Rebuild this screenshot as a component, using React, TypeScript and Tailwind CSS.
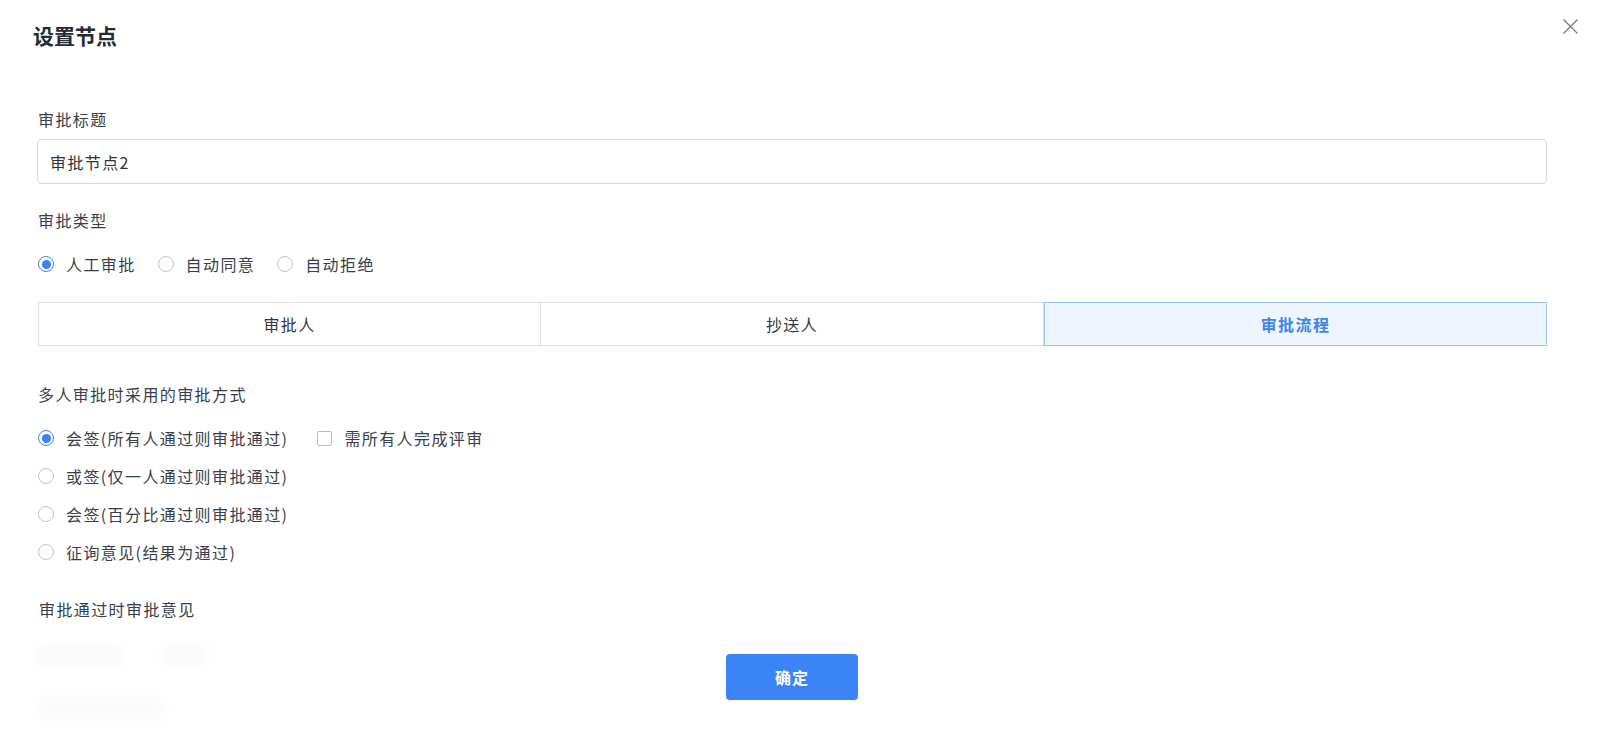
import React from "react";

const Radio = ({ checked, label }: { checked?: boolean; label: string }) => (
  <div className="flex items-center h-[22px]">
    {checked ? (
      <span className="w-4 h-4 rounded-full border-[1.5px] border-[#3b82f6] flex items-center justify-center bg-white">
        <span className="w-[9px] h-[9px] rounded-full bg-[#3b82f6]" />
      </span>
    ) : (
      <span className="w-4 h-4 rounded-full border border-[#c3c5cb] bg-white" />
    )}
    <span className="ml-[12px] text-[16px] tracking-[1.4px] text-[#3a3e4b] leading-[22px]">{label}</span>
  </div>
);

export default function App() {
  return (
    <div className="w-[1598px] h-[729px] bg-white relative overflow-hidden font-['Noto_Sans_CJK_SC',sans-serif]">
      {/* header */}
      <div className="flex items-start justify-between pl-[33px] pr-[20px] pt-[20px]">
        <div className="text-[21px] leading-[30px] font-bold text-[#262a35]">设置节点</div>
        <button className="w-[15px] h-[15px] mt-[-1px]">
          <svg width="15" height="15" viewBox="0 0 15 15" className="block">
            <path d="M0.5 0.5 L14.5 14.5 M14.5 0.5 L0.5 14.5" stroke="#7a7c82" strokeWidth="1.3" fill="none" />
          </svg>
        </button>
      </div>

      {/* body */}
      <div className="flex flex-col pl-[37px] pr-[51px] mt-[58px]">
        <div className="pl-[1px] text-[16px] tracking-[1.4px] leading-[22px] text-[#3a3e4b]">审批标题</div>
        <div className="mt-[9px] h-[45px] rounded-[4px] border border-[#d5d7dd] flex items-center pl-[12px] text-[16px] tracking-[1.4px] text-[#2f333d]">
          审批节点2
        </div>

        <div className="mt-[25px] pl-[1px] text-[16px] tracking-[1.4px] leading-[22px] text-[#3a3e4b]">审批类型</div>
        <div className="mt-[22px] flex items-center gap-[22px] pl-[1px]">
          <Radio checked label="人工审批" />
          <Radio label="自动同意" />
          <Radio label="自动拒绝" />
        </div>

        <div className="mt-[27px] grid grid-cols-3 h-[44px] ml-[1px]">
          <div className="flex items-center justify-center border border-[#dcdfe5] text-[16px] tracking-[1.4px] text-[#333640]">审批人</div>
          <div className="flex items-center justify-center border border-l-0 border-[#dcdfe5] text-[16px] tracking-[1.4px] text-[#333640]">抄送人</div>
          <div className="flex items-center justify-center border border-[#96c4ef] bg-[#eef5fe] text-[16px] tracking-[1.4px] font-bold text-[#3a85f0]">审批流程</div>
        </div>

        <div className="mt-[37px] pl-[1px] text-[16px] tracking-[1.4px] leading-[22px] text-[#3a3e4b]">多人审批时采用的审批方式</div>
        <div className="mt-[22px] flex flex-col gap-[16px] pl-[1px]">
          <div className="flex items-center">
            <Radio checked label="会签(所有人通过则审批通过)" />
            <div className="ml-[29px] flex items-center">
              <span className="w-[15px] h-[15px] border border-[#b9bbc1] rounded-[2px] bg-white" />
              <span className="ml-[12px] text-[16px] tracking-[1.4px] text-[#3a3e4b] leading-[22px]">需所有人完成评审</span>
            </div>
          </div>
          <Radio label="或签(仅一人通过则审批通过)" />
          <Radio label="会签(百分比通过则审批通过)" />
          <Radio label="征询意见(结果为通过)" />
        </div>

        <div className="mt-[35px] pl-[2px] text-[16px] tracking-[1.4px] leading-[22px] text-[#3a3e4b]">审批通过时审批意见</div>
        <div className="mt-[26px] flex items-center gap-[40px] blur-[4px] opacity-60">
          <div className="w-[85px] h-[20px] rounded bg-[#eeeef2]" />
          <div className="w-[45px] h-[20px] rounded bg-[#eeeef2]" />
        </div>
        <div className="mt-[32px] flex items-center blur-[4px] opacity-60">
          <div className="w-[128px] h-[22px] rounded bg-[#eeeef2]" />
        </div>
      </div>

      {/* footer overlay */}
      <div className="absolute left-0 right-0 bottom-0 h-[100px] bg-gradient-to-b from-white/40 to-white/70 flex justify-center pl-[37px] pr-[51px]">
        <div className="pt-[25px]">
          <button className="w-[132px] h-[46px] rounded-[4px] bg-[#3b84f7] text-white text-[16px] font-bold tracking-[1px]">确定</button>
        </div>
      </div>
    </div>
  );
}
